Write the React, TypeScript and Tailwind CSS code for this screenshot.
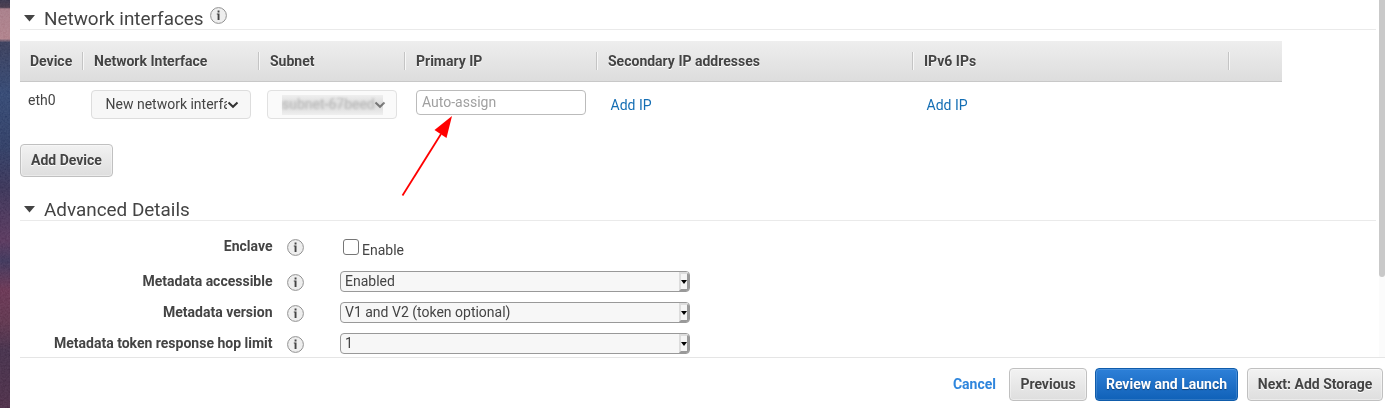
import React from "react";

function InfoIcon() {
  return (
    <svg className="block h-[17px] w-[17px] shrink-0" viewBox="0 0 17 17">
      <circle cx="8.5" cy="8.5" r="7.9" fill="#eee" stroke="#929292" />
      <path d="M7.6 3.6h1.9v1.9H7.6zM6.8 6.6H9.5V13H7.6V7.5H6.8z" fill="#444" />
    </svg>
  );
}

function Caret() {
  return (
    <svg className="mr-[9px] block h-[7px] w-[11px] shrink-0" viewBox="0 0 11 7">
      <path d="M0 0H11L5.5 6.5Z" fill="#444" />
    </svg>
  );
}

function Chevron() {
  return (
    <svg className="block h-2 w-3 shrink-0" viewBox="0 0 12 8" fill="none" stroke="#333" strokeWidth="2">
      <path d="M1.5 1.5L6 5.8L10.5 1.5" />
    </svg>
  );
}

const columns = [
  { label: "Device", width: "w-[63px]" },
  { label: "Network Interface", width: "w-[176px]" },
  { label: "Subnet", width: "w-[146px]" },
  { label: "Primary IP", width: "w-[192px]" },
  { label: "Secondary IP addresses", width: "w-[316px]" },
  { label: "IPv6 IPs", width: "w-[316px]" },
];

function SelectBox({ value }: { value: string }) {
  return (
    <div className="flex h-[21px] w-[350px] overflow-hidden rounded-[4px] border border-[#999] bg-[#f7f7f7]">
      <span className="flex-1 pl-1 text-[14px] leading-[19px]">{value}</span>
      <span className="flex w-[10px] items-center justify-center border-t-2 border-r-2 border-b-2 border-l-2 border-t-[#ddd] border-r-[#999] border-b-[#999] border-l-[#ddd] bg-[#f5f5f5]">
        <svg className="block h-[4px] w-[6px]" viewBox="0 0 6 4">
          <path d="M0 0H6L3 4Z" fill="#000" />
        </svg>
      </span>
    </div>
  );
}

function MetaRow({ label, children }: { label: string; children: React.ReactNode }) {
  return (
    <div className="flex h-[31px] items-start">
      <div className="w-[252.5px] text-right text-[14px] leading-[21px] font-bold">{label}</div>
      <div className="mr-9 ml-[14.5px] pt-[3px]">
        <InfoIcon />
      </div>
      {children}
    </div>
  );
}

const grayButton =
  "h-[33px] shrink-0 rounded-[4px] border border-[#c0c0c0] bg-linear-to-b from-[#f2f2f2] to-[#dedede] text-[14px] leading-[31px] font-bold text-[#444] shadow-[inset_0_0_0_1px_#ffffff66] [text-shadow:0_1px_0_#fff]";

export default function App() {
  return (
    <div className="relative flex h-[408px] w-[1385px] overflow-hidden bg-white font-[Roboto,sans-serif] text-[14px] whitespace-nowrap text-[#444]">
      <svg className="block h-[408px] w-[10px] shrink-0" viewBox="0 0 10 408">
        <defs>
          <linearGradient id="canvas" x2="0" y2="1">
            <stop offset="0" stopColor="#343047" />
            <stop offset=".018" stopColor="#403345" />
            <stop offset=".022" stopColor="#a37884" />
            <stop offset=".095" stopColor="#ab7b85" />
            <stop offset=".104" stopColor="#343855" />
            <stop offset=".23" stopColor="#2e426d" />
            <stop offset=".36" stopColor="#2b385f" />
            <stop offset=".46" stopColor="#352f52" />
            <stop offset=".59" stopColor="#533257" />
            <stop offset=".64" stopColor="#393155" />
            <stop offset=".71" stopColor="#63304d" />
            <stop offset=".79" stopColor="#593048" />
            <stop offset=".86" stopColor="#3f2b45" />
            <stop offset="1" stopColor="#472942" />
          </linearGradient>
          <filter id="grain" x="0" y="0" width="1" height="1">
            <feTurbulence type="fractalNoise" baseFrequency=".55" numOctaves="3" />
            <feColorMatrix type="saturate" values="0" />
            <feComponentTransfer>
              <feFuncA type="linear" slope="0" intercept="1" />
            </feComponentTransfer>
          </filter>
        </defs>
        <rect width="10" height="408" fill="url(#canvas)" />
        <rect width="10" height="408" filter="url(#grain)" opacity=".4" className="mix-blend-soft-light" />
      </svg>

      <div className="flex w-[1375px] flex-col">
        <div className="flex h-[357px] justify-between overflow-hidden">
          <div className="ml-[10px] w-[1356px]">
            <h2 className="flex h-[30px] border-b border-[#eaeaea] pl-1">
              <span className="pt-[15px]"><Caret /></span>
              <span className="w-[166px] pt-[7px] text-[18.9px] leading-[24px]">Network interfaces</span>
              <span className="pt-[7px]"><InfoIcon /></span>
            </h2>

            <div className="mt-[11px] flex h-[41px] w-[1262px] items-center border-b border-[#c8c8c8] bg-linear-to-b from-[#eeeeee] to-[#dddddd]">
              {columns.map((c, i) => (
                <div
                  key={c.label}
                  className={`${c.width} ${i === 0 ? "pl-[10px]" : "pl-[11px]"} h-[18px] shrink-0 border-r border-[#c4c4c4] text-[14px] leading-[19px] font-bold shadow-[1px_0_0_#f7f7f7] [text-shadow:0_1px_0_#fff]`}
                >
                  {c.label}
                </div>
              ))}
            </div>

            <div className="flex h-[62px] items-start">
              <div className="w-[71px] pt-[9px] pl-2 leading-[19px]">eth0</div>
              <div className="mt-2 flex h-[29px] w-[160px] items-center rounded-[4px] border border-[#ddd] bg-[#f7f7f7] pl-[13.5px]">
                <span className="w-[121.5px] overflow-hidden">New network interface</span>
                <Chevron />
              </div>
              <div className="mt-2 ml-4 flex h-[29px] w-[130px] items-center rounded-[4px] border border-[#e1e1e1] bg-[#fafafa] pl-[14px]">
                <div className="flex h-5 w-[101px] items-center bg-linear-to-b from-[#efefef] via-[#dadada] to-[#efefef] text-[#b8b8b8]">
                  <span className="w-[92px] blur-[0.8px]">subnet-67beed</span>
                  <span className="opacity-60 blur-[0.5px]"><Chevron /></span>
                </div>
              </div>
              <input
                className="mt-2 ml-[19px] h-[25px] w-[170px] rounded-[4px] border border-[#bbb] bg-white px-[5px] pb-px text-[14px] placeholder:text-[#a0a0a0]"
                placeholder="Auto-assign"
              />
              <a className="mt-[14px] ml-[24.5px] w-[316px] leading-[18px] text-[#146eb4]">Add IP</a>
              <a className="mt-[14px] leading-[18px] text-[#146eb4]">Add IP</a>
            </div>

            <button className={`${grayButton} w-[93px]`}>Add Device</button>

            <h2 className="mt-[14px] flex h-[30px] border-b border-[#eaeaea] pl-1">
              <span className="pt-[15px]"><Caret /></span>
              <span className="pt-[7px] text-[18.9px] leading-[24px]">Advanced Details</span>
            </h2>

            <div className="pt-[15px]">
              <MetaRow label="Enclave">
                <label className="flex pl-[3px]">
                  <input type="checkbox" className="mt-[3px] mr-[3px] h-4 w-4 appearance-none rounded-[3px] border border-[#767676] bg-white" />
                  <span className="pt-[3px] leading-[22px]">Enable</span>
                </label>
              </MetaRow>
              <div className="h-1" />
              <MetaRow label="Metadata accessible"><SelectBox value="Enabled" /></MetaRow>
              <MetaRow label="Metadata version"><SelectBox value="V1 and V2 (token optional)" /></MetaRow>
              <MetaRow label="Metadata token response hop limit"><SelectBox value="1" /></MetaRow>
            </div>
          </div>
          <div className="w-[6px] bg-[#fbfbfb]">
            <div className="h-[277px] rounded-b-[3px] bg-[#c9c9c9]" />
          </div>
        </div>

        <div className="ml-[10px] flex h-[51px] items-start justify-end border-t border-[#e5e5e5] pt-[10px] pr-[2px]">
          <a className="mr-[13px] leading-[32px] font-bold text-[#2f86dd]">Cancel</a>
          <button className={`${grayButton} mr-2 w-[78px]`}>Previous</button>
          <button className="mr-[9px] h-[33px] w-[143px] shrink-0 rounded-[4px] border border-[#0f5cab] bg-linear-to-b from-[#2d80d8] to-[#0f61b8] text-[14px] leading-[31px] font-bold text-white shadow-[inset_0_0_0_1px_#ffffff22] [text-shadow:0_1px_1px_#0006]">
            Review and Launch
          </button>
          <button className={`${grayButton} w-[136px]`}>Next: Add Storage</button>
        </div>
      </div>

      <svg className="pointer-events-none absolute top-[110px] left-[395px] h-[90px] w-[65px]" viewBox="395 110 65 90">
        <path d="M402.5 195.5L441 134" stroke="#f00" strokeWidth="1.8" fill="none" />
        <path d="M452 116L434.5 130L446.5 138Z" fill="#f00" />
      </svg>
    </div>
  );
}
